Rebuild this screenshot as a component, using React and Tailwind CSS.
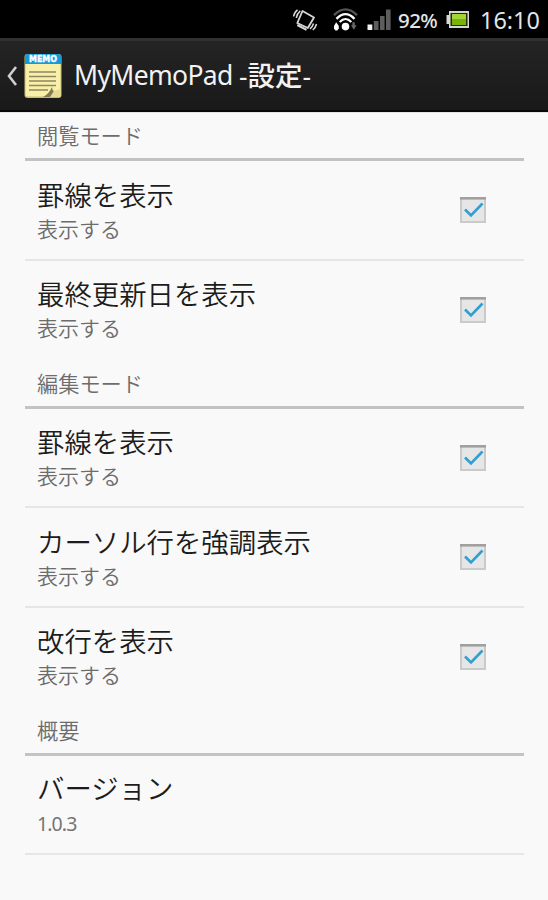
import React from "react";

const jp = "font-['Noto_Sans_CJK_JP',sans-serif]";

function StatusBar() {
  return (
    <div className="flex h-[38px] items-center bg-black pl-[292px] text-[#e4e4e4]">
      <svg className="h-[38px] w-[104px] shrink-0" viewBox="292 0 104 38" fill="none">
        <g stroke="#d8d8d8">
          <path d="M302.5 11 L314 17.5 L307.8 28 L297.3 23 Z" strokeWidth="1.8" strokeLinejoin="round" />
          <path d="M297.3 25 L306.5 29.8" strokeWidth="2" />
          <path d="M293.6 16.5 Q294 12.5 297.5 9.8 M296.3 18 Q297 13.5 300.3 10.8" strokeWidth="1.5" />
          <path d="M310 28.8 Q312.8 26.5 313.5 23.5 M312.8 30 Q315.7 27.5 316.5 24" strokeWidth="1.5" />
        </g>
        <path d="M334 15.2 Q345.5 3.5 357 15.2" stroke="#555" strokeWidth="2.4" />
        <path d="M336.5 18.8 Q345.5 9.5 354.5 18.8" stroke="#fff" strokeWidth="2.4" />
        <path d="M339.7 22 Q345.5 16 351.3 22" stroke="#fff" strokeWidth="2.2" />
        <circle cx="345.5" cy="26.6" r="3.8" fill="#fff" />
        <path d="M334 26l2.2-3.8L338.8 26v2.2l-1.4 2.3h-2l-1.4-2.3z" fill="#fff" />
        <path d="M352.4 22.2h2.4v3h1.8l-2.8 4.6-2.8-4.6h1.4z" fill="#666" />
        <path d="M367.5 24.5h4.8V30h-4.8z" fill="#f2f2f2" />
        <path d="M373.8 21h4.7v9h-4.7zM380 16h4.6v14H380zM386 9.5h4.6V30H386z" fill="#5d5d5d" />
      </svg>
      <span className="ml-[2px] w-[48px] whitespace-nowrap pt-[3px] font-['Noto_Sans',sans-serif] text-[20.5px] leading-none font-medium tracking-[-0.6px]">92%</span>
      <svg className="h-[19px] w-[24px] shrink-0" viewBox="0 0 24 19">
        <path d="M3 1h20v17H3v-4H.5V5H3z" fill="#d7d7d7" />
        <path d="M4.5 3h17v13h-17z" fill="#223000" />
        <path d="M6 4h14v11H6z" fill="#78b30b" />
        <path d="M6 4h14v5H6z" fill="#a3d534" />
      </svg>
      <span className="ml-[10px] whitespace-nowrap pt-[3px] font-['Noto_Sans',sans-serif] text-[23.4px] leading-none">16:10</span>
    </div>
  );
}

function MemoIcon() {
  return (
    <svg className="ml-[6px] h-[46px] w-[38px] shrink-0" viewBox="0 0 38 46">
      <rect x="0.5" y="1" width="37" height="44" rx="3" fill="#c8bd73" />
      <rect x="1.5" y="1.5" width="35" height="42" rx="2.5" fill="#f8efa9" />
      <path d="M1 11V3.5Q1 1 3.5 1h31Q37 1 37 3.5V11z" fill="#159bdc" />
      <text x="19" y="9.2" textAnchor="middle" textLength="28" lengthAdjust="spacingAndGlyphs" fontSize="8" fontWeight="900" fill="#fff" stroke="#fff" strokeWidth=".4" fontFamily="DejaVu Sans">MEMO</text>
      <path d="M5 19h27M5 23.5h27M5 28h27M5 32.5h27M5 37h19" stroke="#8f8862" strokeWidth="1.5" />
      <path d="M19 44Q25 41 28 34Q28 37 30 38L27 44z" fill="#817b56" />
      <path d="M26 44L30 38Q34 38 37 35V42Q37 44 34 44z" fill="#e5db92" />
    </svg>
  );
}

function ActionBar() {
  return (
    <header className="flex h-[74px] items-center border-t-[3px] border-b-2 border-t-[#303030] border-b-[#090909] bg-linear-to-b from-[#242424] to-[#191919] pl-[7px] text-[#f2f2f2]">
      <svg className="h-[20px] w-[11px] shrink-0" viewBox="0 0 11 20" fill="none">
        <path d="M9 1L2 10l7 9" stroke="#d0d0d0" strokeWidth="2.6" />
      </svg>
      <MemoIcon />
      <h1 className="ml-[12px] flex items-center whitespace-nowrap pb-[2px] font-['Noto_Sans','Noto_Sans_CJK_JP',sans-serif] text-[26.5px] leading-[36px]">
        <span className="w-[165px] tracking-[-0.65px]">MyMemoPad</span>
        <span>-<span className="font-['Noto_Sans_CJK_JP',sans-serif] text-[27.5px] font-medium">設定</span>-</span>
      </h1>
    </header>
  );
}

function SectionHeader({ children }) {
  return (
    <h2 className={`${jp} flex h-[49px] items-center border-b-[3px] border-[#c3c3c3] pl-[12px] text-[21.2px] leading-none font-[350] text-[#6c6c6c]`}>
      {children}
    </h2>
  );
}

function Checkbox() {
  return (
    <svg className="mt-px mr-[38px] h-[26px] w-[26px] shrink-0" viewBox="0 0 26 26" fill="none">
      <rect x="1" y="1" width="24" height="24" fill="#e6e6e6" stroke="#cacaca" strokeWidth="2" />
      <path d="M0 1.3h26" stroke="#a0a0a0" strokeWidth="2.6" />
      <path d="M5 12.5l6 6L22.5 6.5" stroke="#309fd2" strokeWidth="2.6" />
    </svg>
  );
}

function Row({ title, summary, checked, last, latin }) {
  return (
    <div className={`flex items-center justify-between border-b-2 pl-[12px] ${last ? "h-[99px] border-transparent" : "h-[99.5px] border-[#e6e6e6]"}`}>
      <div className={`${jp} whitespace-nowrap`}>
        <div className="text-[27.4px] leading-[36px] font-[350] text-[#1c1c1c]">{title}</div>
        <div className={latin ? "pt-[3px] font-['Noto_Sans',sans-serif] text-[19.5px] leading-[32px] tracking-[-0.9px] text-[#747474]" : "text-[21px] leading-[32px] font-[350] text-[#6c6c6c]"}>{summary}</div>
      </div>
      {checked && <Checkbox />}
    </div>
  );
}

export default function App() {
  return (
    <div className="h-[900px] w-[548px] overflow-hidden bg-[#f9f9f9]">
      <StatusBar />
      <ActionBar />
      <main className="border-t border-[#e2e2e2] pr-[24px] pl-[25px]">
        <div className="-mt-px">
          <SectionHeader>閲覧モード</SectionHeader>
          <Row title="罫線を表示" summary="表示する" checked />
          <Row title="最終更新日を表示" summary="表示する" checked last />
          <SectionHeader>編集モード</SectionHeader>
          <Row title="罫線を表示" summary="表示する" checked />
          <Row title="カーソル行を強調表示" summary="表示する" checked />
          <Row title="改行を表示" summary="表示する" checked last />
          <SectionHeader>概要</SectionHeader>
          <Row title="バージョン" summary="1.0.3" latin />
        </div>
      </main>
    </div>
  );
}
